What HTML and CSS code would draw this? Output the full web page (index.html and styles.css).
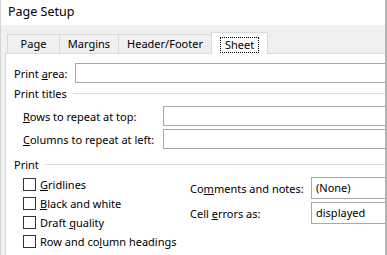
FILE: index.html
```html
<!DOCTYPE html>
<html>
  <head>
    <meta charset="UTF-8" />
    <title>Page Setup</title>
    <link rel="stylesheet" href="styles.css">
  </head>
  <body>
    <div class="window">
      <div class="titlebar">Page Setup</div>
      <div class="client">
        <div class="tabs">
          <div class="tab tab-page">Page</div>
          <div class="tab tab-margins">Margins</div>
          <div class="tab tab-header">Header/Footer</div>
          <div class="tab active"><span class="focus">Sheet</span></div>
        </div>
        <div class="panel">
          <div class="row area-row">
            <label class="area-label">Print <u>a</u>rea:</label>
            <div class="field"></div>
          </div>
          <div class="group-title titles-group"><span>Print titles</span></div>
          <div class="row title-row first">
            <label class="title-label"><u>R</u>ows to repeat at top:</label>
            <div class="field"></div>
          </div>
          <div class="row title-row">
            <label class="title-label"><u>C</u>olumns to repeat at left:</label>
            <div class="field"></div>
          </div>
          <div class="group-title print-group-title"><span>Print</span></div>
          <div class="print-group">
            <div class="checks">
              <div class="check"><span class="box"></span><span><u>G</u>ridlines</span></div>
              <div class="check"><span class="box"></span><span><u>B</u>lack and white</span></div>
              <div class="check"><span class="box"></span><span>Draft <u>q</u>uality</span></div>
              <div class="check"><span class="box"></span><span>Row and co<u>l</u>umn headings</span></div>
            </div>
            <div class="options">
              <div class="option">
                <label class="option-label">Co<u>m</u>ments and notes:</label>
                <div class="select">(None)</div>
              </div>
              <div class="option">
                <label class="option-label">Cell <u>e</u>rrors as:</label>
                <div class="select">displayed</div>
              </div>
            </div>
          </div>
        </div>
      </div>
    </div>
  </body>
</html>
```

FILE: styles.css
```css
/* Dialog frame */
body {
  margin: 0;
  padding: 0;
  font-family: "Noto Sans", "Open Sans", sans-serif;
  font-size: 11px;
  color: #000;
  background: #fff;
  white-space: nowrap;
}
.window {
  width: 387px;
  height: 255px;
  box-sizing: border-box;
  border-left: 1px solid #d4d4d4;
  border-right: 2px solid #b4b4b4;
  overflow: hidden;
  background: #fff;
}
.titlebar {
  height: 25px;
  padding-left: 7px;
  line-height: 23px;
  font-size: 12.5px;
  background: #fff;
}
.client {
  background: #f0f0f0;
  padding: 7px 0 0 4px;
  height: 240px;
}

/* Tabs */
.tabs {
  display: flex;
  align-items: flex-end;
  height: 21px;
  padding-left: 2px;
}
.tab {
  height: 19px;
  box-sizing: border-box;
  border: 1px solid #d9d9d9;
  border-bottom: none;
  border-right: none;
  line-height: 18px;
  text-align: center;
}
.tab-page { width: 52px; }
.tab-margins { width: 59px; }
.tab-header { width: 93px; }
.tab.active {
  width: 57px;
  height: 22px;
  margin-bottom: -1px;
  background: #fff;
  border-right: 1px solid #d9d9d9;
  padding-top: 4px;
  line-height: 13px;
}
.focus {
  display: inline-block;
  padding: 0 4px 1px;
  line-height: 13px;
  border: 1px dotted #000;
}

/* Sheet panel */
.panel {
  background: #fff;
  border-top: 1px solid #d9d9d9;
  border-left: 1px solid #d9d9d9;
  height: 210px;
  padding-left: 8px;
}
.row {
  display: flex;
  align-items: center;
  height: 20px;
}
.area-row {
  padding-top: 9px;
}
.area-label { width: 61px; }
.field {
  flex: 1;
  height: 20px;
  box-sizing: border-box;
  border: 1px solid #a8a8a8;
  border-right: none;
}
.group-title {
  display: flex;
  align-items: center;
  height: 18px;
  margin-top: 1px;
}
.group-title::after {
  content: "";
  flex: 1;
  height: 1px;
  background: #dcdcdc;
  margin-left: 6px;
}
.title-row {
  padding-left: 9px;
  margin-top: 3px;
}
.title-row.first { margin-top: 4px; }
.title-label { width: 140px; }
.print-group-title { margin-top: 6px; }

/* Print options */
.print-group {
  display: flex;
  margin-top: 2px;
  padding-left: 9px;
}
.checks { width: 167px; }
.check {
  display: flex;
  align-items: center;
  height: 19px;
}
.box {
  width: 13px;
  height: 13px;
  box-sizing: border-box;
  border: 1px solid #333;
  margin-right: 4px;
}
.options {
  flex: 1;
  padding-top: 2px;
}
.option {
  display: flex;
  align-items: center;
  height: 22px;
  margin-bottom: 3px;
}
.option-label { width: 121px; }
.select {
  flex: 1;
  height: 22px;
  box-sizing: border-box;
  border: 1px solid #a8a8a8;
  border-right: none;
  padding-left: 4px;
  line-height: 20px;
}
```
